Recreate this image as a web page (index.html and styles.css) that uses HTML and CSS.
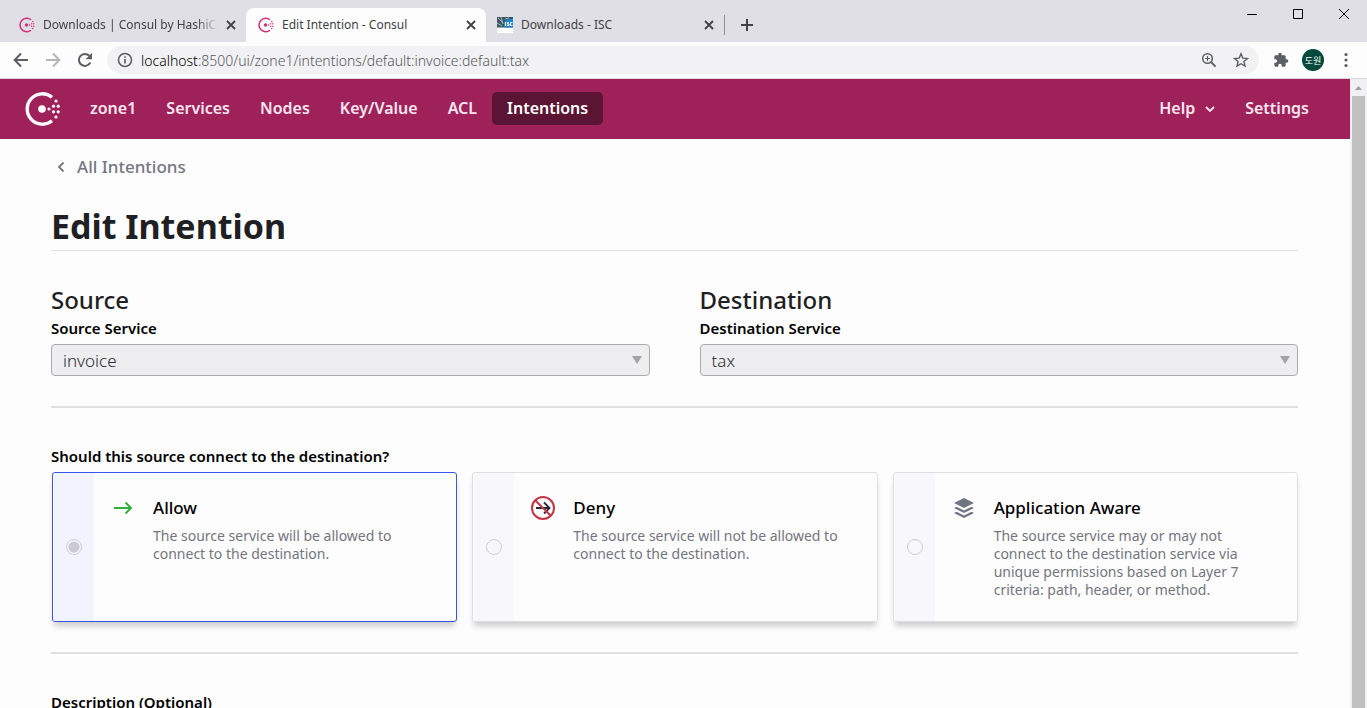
FILE: index.html
```html
<!DOCTYPE html>
<html lang="en">
<head>
<meta charset="utf-8">
<title>Edit Intention - Consul</title>
<link rel="stylesheet" href="styles.css">
</head>
<body>
<svg class="defs" aria-hidden="true">
  <symbol id="consul" viewBox="0 0 36 34">
    <path d="M27 5.2A15.2 15.2 0 1 0 27 28.8" fill="none" stroke="currentColor" stroke-width="3.4"/>
    <circle cx="17" cy="17" r="3.8" fill="currentColor"/>
    <g fill="currentColor">
      <circle cx="24" cy="17" r="1.6"/><circle cx="28.5" cy="14.2" r="1.6"/><circle cx="28.5" cy="19.8" r="1.6"/>
      <circle cx="33.2" cy="14.2" r="1.6"/><circle cx="33.2" cy="19.8" r="1.6"/>
      <circle cx="31" cy="9" r="1.6"/><circle cx="31" cy="25" r="1.6"/>
    </g>
  </symbol>
  <symbol id="close" viewBox="0 0 10 10"><path d="M1 1l8 8M9 1l-8 8" fill="none" stroke="currentColor" stroke-width="1.8"/></symbol>
</svg>

<header class="tabstrip">
  <div class="tabs">
    <div class="tab">
      <svg class="favicon brand"><use href="#consul"/></svg>
      <span class="tab-title faded">Downloads | Consul by HashiCorp</span>
      <button class="tab-close" aria-label="Close tab"><svg><use href="#close"/></svg></button>
    </div>
    <div class="tab active">
      <svg class="favicon brand"><use href="#consul"/></svg>
      <span class="tab-title">Edit Intention - Consul</span>
      <button class="tab-close" aria-label="Close tab"><svg><use href="#close"/></svg></button>
    </div>
    <div class="tab last">
      <svg class="favicon" viewBox="0 0 16 16"><path fill="#fff" d="M0 0h16v16H0z"/><path fill="#3d5563" d="M0 0h16v10.500H0z"/><path d="M1 1l5 5M0 6l5 3M4 0l2 7M8 2l4-1" stroke="#a9bac4" fill="none"/><path fill="#1c86cf" d="M7 10.500V5l3-2.500 6-1v9z"/><path d="M8.500 5v4M12 5.500h-1.500v1.500H12v1.500h-2M15.500 5.500h-2v3h2" stroke="#fff" fill="none"/></svg>
      <span class="tab-title">Downloads - ISC</span>
      <button class="tab-close" aria-label="Close tab"><svg><use href="#close"/></svg></button>
    </div>
    <button class="new-tab" aria-label="New tab"><svg viewBox="0 0 12 12"><path d="M6 0v12M0 6h12" stroke="currentColor" stroke-width="2"/></svg></button>
  </div>
  <div class="window-buttons">
    <button aria-label="Minimize"><svg viewBox="0 0 12 12"><path d="M1 6.500h10" stroke="currentColor"/></svg></button>
    <button aria-label="Maximize"><svg viewBox="0 0 12 12"><path d="M1.500 1.500h9v9h-9z" fill="none" stroke="currentColor"/></svg></button>
    <button aria-label="Close"><svg viewBox="0 0 12 12"><path d="M1 1l10 10M11 1L1 11" stroke="currentColor"/></svg></button>
  </div>
</header>

<div class="toolbar">
  <button class="tool" aria-label="Back"><svg viewBox="0 0 16 16"><path d="M15 8H2M8 1.500L1.700 8 8 14.500" fill="none" stroke="currentColor" stroke-width="2"/></svg></button>
  <button class="tool dim" aria-label="Forward"><svg viewBox="0 0 16 16"><path d="M1 8h13M8 1.500L14.300 8 8 14.500" fill="none" stroke="currentColor" stroke-width="2"/></svg></button>
  <button class="tool" aria-label="Reload"><svg viewBox="0 0 16 16"><path d="M13.300 10.500A6 6 0 1 1 12.300 3.800" fill="none" stroke="currentColor" stroke-width="2"/><path d="M15 .8v6.400H8.600z" fill="currentColor"/></svg></button>
  <div class="address">
    <svg class="info" viewBox="0 0 16 16"><circle cx="8" cy="8" r="6.500" fill="none" stroke="currentColor" stroke-width="1.500"/><path d="M8 7v4.500M8 4.200v1.600" stroke="currentColor" stroke-width="1.600"/></svg>
    <span class="url"><b>localhost</b>:8500/ui/zone1/intentions/default:invoice:default:tax</span>
    <button class="tool" aria-label="Zoom"><svg viewBox="0 0 16 16"><circle cx="6.500" cy="6.500" r="4.800" fill="none" stroke="currentColor" stroke-width="1.500"/><path d="M10 10l4.600 4.600" stroke="currentColor" stroke-width="1.800"/><path d="M6.500 4v5M4 6.500h5" stroke="currentColor" stroke-width="1.200"/></svg></button>
    <button class="tool" aria-label="Bookmark"><svg viewBox="0 0 16 16"><path d="M8 1.800l1.800 4.300 4.700.4-3.600 3 1.100 4.600L8 11.700l-4 2.400 1.100-4.600-3.600-3 4.700-.4z" fill="none" stroke="currentColor" stroke-width="1.400"/></svg></button>
  </div>
  <button class="tool ext" aria-label="Extensions"><svg viewBox="0 0 24 24"><path fill="currentColor" d="M20.500 11H19V7c0-1.100-.9-2-2-2h-4V3.500a2.500 2.500 0 0 0-5 0V5H4c-1.100 0-2 .9-2 2v3.800h1.500a2.700 2.700 0 0 1 0 5.400H2V20c0 1.100.9 2 2 2h3.800v-1.500a2.700 2.700 0 0 1 5.400 0V22H17c1.100 0 2-.9 2-2v-4h1.500a2.500 2.500 0 0 0 0-5z"/></svg></button>
  <button class="avatar" lang="ko">도원</button>
  <button class="tool more" aria-label="Menu"><svg viewBox="0 0 16 16"><g fill="currentColor"><circle cx="8" cy="2.500" r="1.600"/><circle cx="8" cy="8" r="1.600"/><circle cx="8" cy="13.500" r="1.600"/></g></svg></button>
</div>

<div class="viewport">
  <div class="page">
    <nav class="navbar">
      <a class="logo" href="#" aria-label="Consul"><svg><use href="#consul"/></svg></a>
      <a href="#">zone1</a>
      <a href="#">Services</a>
      <a href="#">Nodes</a>
      <a href="#">Key/Value</a>
      <a href="#">ACL</a>
      <a class="current" href="#">Intentions</a>
      <button class="help">Help <svg viewBox="0 0 10 6"><path d="M1 1l4 4 4-4" fill="none" stroke="currentColor" stroke-width="1.800"/></svg></button>
      <a class="settings" href="#">Settings</a>
    </nav>
    <main class="content">
      <a class="back" href="#"><svg viewBox="0 0 8 12"><path d="M6.500 1.500L2 6l4.500 4.500" fill="none" stroke="currentColor" stroke-width="1.800"/></svg>All Intentions</a>
      <h1>Edit Intention</h1>
      <form>
        <div class="endpoints">
          <section>
            <h2>Source</h2>
            <label for="source">Source Service</label>
            <div class="select"><select id="source" disabled><option>invoice</option></select></div>
          </section>
          <section>
            <h2>Destination</h2>
            <label for="destination">Destination Service</label>
            <div class="select"><select id="destination" disabled><option>tax</option></select></div>
          </section>
        </div>
        <fieldset>
          <legend>Should this source connect to the destination?</legend>
          <div class="cards">
            <label class="card selected">
              <span class="pick"><input type="radio" name="action" checked disabled></span>
              <svg class="card-icon" viewBox="0 0 24 24"><path d="M3 12h17M14.500 6.500L20 12l-5.500 5.500" fill="none" stroke="#2eb039" stroke-width="1.900"/></svg>
              <span class="card-text"><strong>Allow</strong><span>The source service will be allowed to connect to the destination.</span></span>
            </label>
            <label class="card">
              <span class="pick"><input type="radio" name="action" disabled></span>
              <svg class="card-icon" viewBox="0 0 24 24"><path d="M5 12h13M13 6.500l5.500 5.500-5.500 5.500" fill="none" stroke="#252937" stroke-width="1.800"/><circle cx="12" cy="12" r="11" fill="none" stroke="#c73445" stroke-width="2"/><path d="M4.200 4.200l15.600 15.600" stroke="#c73445" stroke-width="2"/></svg>
              <span class="card-text"><strong>Deny</strong><span>The source service will not be allowed to connect to the destination.</span></span>
            </label>
            <label class="card">
              <span class="pick"><input type="radio" name="action" disabled></span>
              <svg class="card-icon" viewBox="0 0 24 24"><g fill="#6f7682"><path d="M12 2l10 5-10 5L2 7z"/><path d="M4.500 10.700L12 14.400l7.500-3.700L22 12l-10 5-10-5z"/><path d="M4.500 15.700L12 19.400l7.500-3.700L22 17l-10 5-10-5z"/></g></svg>
              <span class="card-text"><strong>Application Aware</strong><span>The source service may or may not connect to the destination service via unique permissions based on Layer 7 criteria: path, header, or method.</span></span>
            </label>
          </div>
        </fieldset>
        <label class="description" for="description">Description (Optional)</label>
        <input class="text" id="description" type="text">
      </form>
    </main>
  </div>
  <div class="scrollbar" aria-hidden="true"><svg viewBox="0 0 17 17"><path d="M5 11l3.500-4 3.500 4z" fill="#a0a0a0"/></svg><div class="thumb"></div></div>
</div>
</body>
</html>
```

FILE: styles.css
```css
* { box-sizing: border-box; }
body {
  margin: 0;
  height: 100vh;
  overflow: hidden;
  display: flex;
  flex-direction: column;
  background: #fdfdfe;
  color: #1f1f24;
  font-family: "Noto Sans", "Open Sans", "Noto Sans CJK KR", sans-serif;
}
button {
  border: 0;
  padding: 0;
  background: none;
  color: inherit;
  font: inherit;
}
a { color: inherit; text-decoration: none; }
svg { display: block; flex: none; }
.defs { position: absolute; width: 0; height: 0; }

/* Browser frame */
.tabstrip {
  flex: none;
  height: 42px;
  display: flex;
  justify-content: space-between;
  background: #e0dfe5;
  color: #3f4246;
}
.tabs { display: flex; align-items: flex-end; padding-left: 7px; }
.tab {
  width: 239px;
  height: 34px;
  display: flex;
  align-items: center;
  gap: 8px;
  padding: 0 10px 1px 12px;
  font-size: 12px;
}
.tab.active { width: 240px; background: #fdfdfe; border-radius: 8px 8px 0 0; }
.tab.last { width: 238px; padding-left: 11px; }
.favicon { width: 16px; height: 16px; }
.brand { color: #d62f78; }
.tab-title { flex: 1; overflow: hidden; white-space: nowrap; }
.tab-title.faded { mask-image: linear-gradient(to right, #000 88%, transparent); }
.tab-close svg { width: 10px; height: 10px; }
.new-tab {
  height: 20px;
  margin-bottom: 7px;
  padding-left: 16px;
  border-left: 1px solid #8f9094;
}
.new-tab svg { width: 12px; height: 12px; }
.window-buttons { display: flex; height: 28px; color: #000; }
.window-buttons button { width: 46px; display: grid; place-items: center; }
.window-buttons svg { width: 12px; height: 12px; }

.toolbar {
  flex: none;
  height: 37px;
  display: flex;
  align-items: center;
  padding: 0 10px 0 5px;
  border-bottom: 1px solid #dadade;
  color: #5b5e63;
}
.tool { width: 32px; height: 28px; display: grid; place-items: center; flex: none; }
.tool svg { width: 16px; height: 16px; }
.dim { color: #b5b6ba; }
.address {
  flex: 1;
  height: 28px;
  display: flex;
  align-items: center;
  margin-left: 6px;
  padding: 0 2px 0 10px;
  border-radius: 14px;
  background: #f2f2f5;
}
.url { flex: 1; margin-left: 8px; font-size: 14px; font-weight: 300; color: #55575b; }
.url b { font-weight: 300; color: #000; }
.ext { margin-left: 6px; }
.avatar {
  width: 22px;
  height: 22px;
  border-radius: 50%;
  background: #04493c;
  color: #fff;
  font-family: "Noto Sans CJK KR", sans-serif;
  font-size: 9px;
  margin: 0 11px 0 5px;
}
.more { width: 22px; }
.info { width: 16px; height: 16px; }

.viewport { flex: 1; min-height: 0; display: flex; }
.page { flex: 1; overflow: hidden; }
.scrollbar {
  width: 17px;
  display: flex;
  flex-direction: column;
  align-items: center;
  background: #f1f1f3;
}
.scrollbar svg { width: 17px; height: 17px; }
.thumb { width: 13px; flex: 1; background: #c0c0c0; }

/* Main navigation */
.navbar {
  height: 60px;
  display: flex;
  align-items: center;
  padding: 0 26px 1px 25px;
  background: #9e2159;
  color: #fbe6ef;
  font-size: 16px;
  font-weight: 600;
}
.navbar a, .help { padding: 0 15px; line-height: 33px; }
.navbar .logo { padding: 0 14px 0 0; color: #fff; }
.logo svg { width: 36px; height: 34px; }
.navbar .current { border-radius: 5px; background: #5b1434; color: #fff; }
.help { display: flex; align-items: center; gap: 10px; margin-left: auto; }
.help svg { width: 10px; height: 6px; }

/* Intention form */
.content { padding: 14px 52px 0 51px; }
.back {
  display: flex;
  align-items: center;
  gap: 12px;
  padding-left: 6px;
  color: #73767f;
  font-size: 17px;
  font-weight: 500;
  line-height: 28px;
}
.back svg { width: 8px; height: 12px; }
h1 {
  margin: 21px 0 32px;
  border-bottom: 1px solid #dfdfe3;
  font-size: 34px;
  line-height: 48px;
}
h2 { margin: 0; font-size: 24px; font-weight: 500; line-height: 34px; }
label, legend { color: #000; font-size: 15px; font-weight: 600; line-height: 22px; }
.endpoints {
  display: grid;
  grid-template-columns: 1fr 1fr;
  gap: 50px;
  padding-bottom: 30px;
  border-bottom: 2px solid #dfdfe3;
}
.endpoints label { display: block; margin-bottom: 5px; }
.select { display: grid; align-items: center; }
.select::after {
  content: "";
  grid-area: 1 / 1;
  justify-self: end;
  margin-right: 8px;
  border: 5px solid transparent;
  border-top: 8px solid #a3a4a8;
  border-bottom: 0;
}
select {
  grid-area: 1 / 1;
  appearance: none;
  width: 100%;
  height: 32px;
  padding: 0 11px;
  border: 1px solid #a9aaae;
  border-radius: 4px;
  background: #eeeef1;
  color: #2b2b30;
  opacity: 1;
  font: 300 17px "Noto Sans", sans-serif;
}
fieldset {
  min-width: 0;
  margin: 0;
  padding: 37px 0 30px;
  border: 0;
  border-bottom: 2px solid #dfdfe3;
}
legend { float: left; width: 100%; padding: 0; margin-bottom: 5px; }
.cards {
  clear: both;
  display: grid;
  grid-template-columns: 1fr 1fr 1fr;
  gap: 15px;
  padding-left: 1px;
}
.card {
  min-height: 150px;
  display: flex;
  align-items: flex-start;
  border: 1px solid #dedee4;
  border-radius: 3px;
  box-shadow: 0 6px 6px -2px rgba(0, 0, 0, .2);
}
.card.selected { border-color: #3953ef; }
.pick {
  align-self: stretch;
  width: 40px;
  display: grid;
  place-items: center;
  margin-left: 1px;
  background: #f8f7fc;
}
.selected .pick { background: #f1f3ff; }
.pick input {
  appearance: none;
  width: 16px;
  height: 16px;
  margin: 0;
  border: 1px solid #cfcfd3;
  border-radius: 50%;
}
.pick input:checked { background: radial-gradient(circle, #cbcbd1 5px, transparent 6px); }
.card-icon { width: 24px; height: 24px; margin: 23px 18px 0 17px; }
.card-text { flex: 1; padding: 23px 34px 22px 0; }
.card-text strong, .card-text span { display: block; }
.card-text strong { font-size: 17px; font-weight: 500; line-height: 24px; }
.card-text span {
  margin-top: 7px;
  color: #73767f;
  font-size: 14px;
  font-weight: 400;
  line-height: 18px;
}
.description { display: block; margin-top: 37px; }
.text { width: 100%; height: 32px; margin-top: 6px; border: 1px solid #a9aaae; border-radius: 4px; }
```
